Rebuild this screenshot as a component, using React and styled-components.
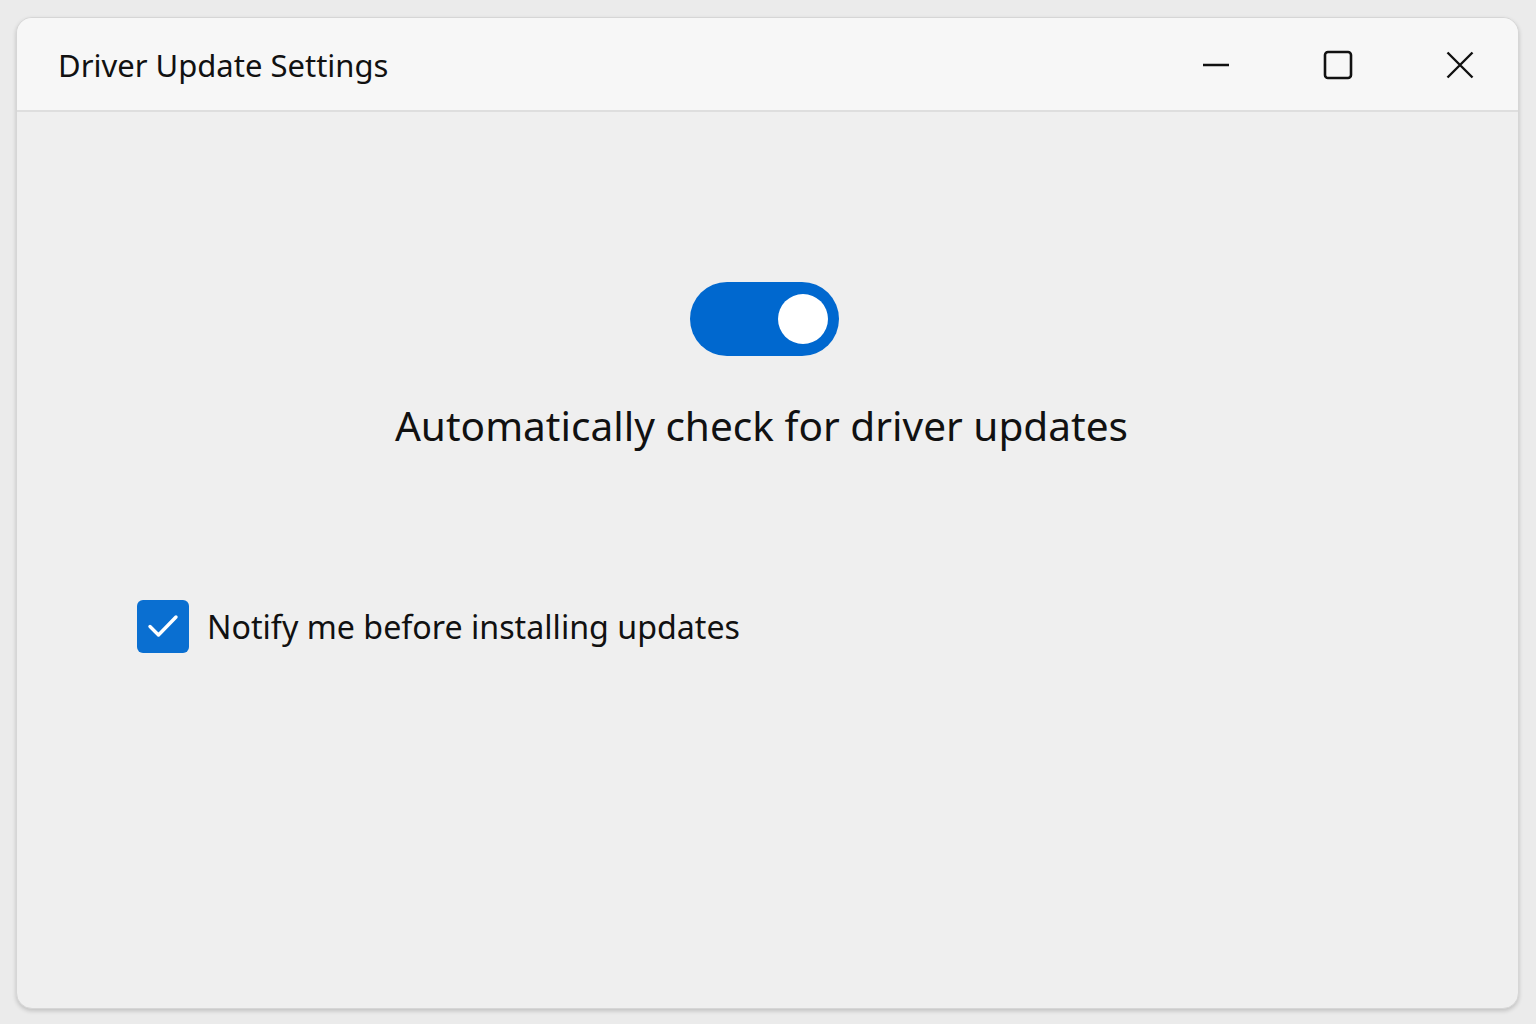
import React from "react";
import styled, { createGlobalStyle } from "styled-components";

const Global = createGlobalStyle`
  html, body {
    margin: 0;
    padding: 0;
    background: #ebebeb;
    font-family: "Noto Sans", "Open Sans", sans-serif;
    color: #111;
  }
`;

const Page = styled.div`
  width: 1536px;
  height: 1024px;
  box-sizing: border-box;
  padding: 17px 17px 17px 16px;
`;

const Window = styled.div`
  height: 990px;
  border-radius: 16px;
  background: #efefef;
  border: 1px solid #d6d6d6;
  box-shadow: 0 2px 4px rgba(0, 0, 0, 0.18);
  overflow: hidden;
  display: flex;
  flex-direction: column;
`;

const TitleBar = styled.div`
  height: 92px;
  flex: none;
  background: #f7f7f7;
  border-bottom: 2px solid #dedede;
  display: flex;
  align-items: center;
  padding-left: 41px;
`;

const Title = styled.div`
  font-size: 31px;
  flex: 1;
  margin-top: 1px;
`;

const Controls = styled.div`
  display: flex;
  align-items: center;
  margin-top: 2px;
  margin-right: -3px;
`;

const ControlButton = styled.button`
  width: 122px;
  height: 60px;
  border: none;
  background: transparent;
  display: flex;
  align-items: center;
  justify-content: center;
  padding: 0;
  color: #111;
  svg {
    display: block;
  }
`;

const Body = styled.div`
  flex: 1;
  display: flex;
  flex-direction: column;
  padding: 170px 0 0 120px;
`;

const Center = styled.div`
  display: flex;
  flex-direction: column;
  align-items: center;
  margin-left: -120px;
  margin-right: 12px;
`;

const Toggle = styled.div`
  width: 149px;
  height: 74px;
  margin-left: 6px;
  border-radius: 37px;
  background: ${(p) => (p.on ? "#0068cf" : "#8a8a8a")};
  display: flex;
  align-items: center;
  justify-content: ${(p) => (p.on ? "flex-end" : "flex-start")};
  padding: 0 11px;
  box-sizing: border-box;
  cursor: pointer;
`;

const Knob = styled.div`
  width: 50px;
  height: 50px;
  border-radius: 50%;
  background: #fff;
`;

const Heading = styled.div`
  font-size: 40.6px;
  margin-top: 44px;
  line-height: 1.3;
`;

const CheckRow = styled.label`
  display: flex;
  align-items: center;
  gap: 18px;
  margin-top: 147px;
  cursor: pointer;
`;

const Box = styled.span`
  width: 52px;
  height: 53px;
  border-radius: 6px;
  background: #0a6fd1;
  display: flex;
  align-items: center;
  justify-content: center;
`;

const Label = styled.span`
  font-size: 32.2px;
`;

export default function App() {
  const [on, setOn] = React.useState(true);
  const [notify, setNotify] = React.useState(true);

  return (
    <>
      <Global />
      <Page>
        <Window>
          <TitleBar>
            <Title>Driver Update Settings</Title>
            <Controls>
              <ControlButton aria-label="Minimize">
                <svg width="28" height="4" viewBox="0 0 28 4">
                  <path d="M1 2h26" stroke="#111" strokeWidth="2.4" />
                </svg>
              </ControlButton>
              <ControlButton aria-label="Maximize">
                <svg width="30" height="30" viewBox="0 0 30 30">
                  <rect x="2" y="2" width="26" height="26" rx="3" fill="none" stroke="#111" strokeWidth="2.6" />
                </svg>
              </ControlButton>
              <ControlButton aria-label="Close">
                <svg width="28" height="28" viewBox="0 0 28 28">
                  <path d="M1.5 1.5l25 25M26.5 1.5l-25 25" stroke="#111" strokeWidth="2.4" />
                </svg>
              </ControlButton>
            </Controls>
          </TitleBar>
          <Body>
            <Center>
              <Toggle on={on} onClick={() => setOn(!on)}>
                <Knob />
              </Toggle>
              <Heading>Automatically check for driver updates</Heading>
            </Center>
            <CheckRow onClick={() => setNotify(!notify)}>
              <Box>
                {notify && (
                  <svg width="34" height="34" viewBox="0 0 34 34">
                    <path d="M4 17.5l8.5 8.5L30 8" fill="none" stroke="#fff" strokeWidth="3.4" strokeLinecap="round" strokeLinejoin="round" />
                  </svg>
                )}
              </Box>
              <Label>Notify me before installing updates</Label>
            </CheckRow>
          </Body>
        </Window>
      </Page>
    </>
  );
}
